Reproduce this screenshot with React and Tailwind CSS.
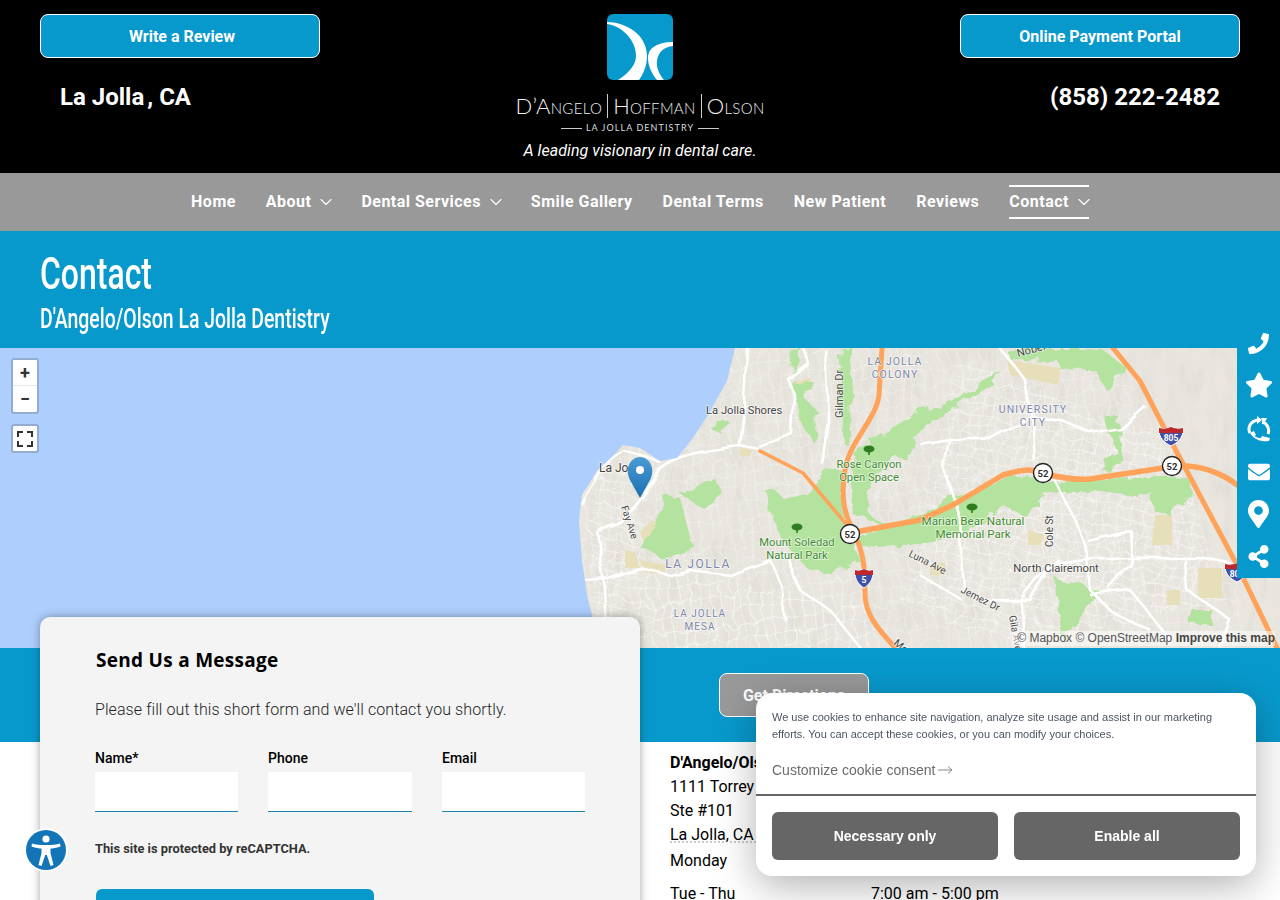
import React from "react";
import { FaStar, FaEnvelope, FaMapMarkerAlt, FaShareAlt, FaPhoneAlt } from "react-icons/fa";
import { ChevronDown } from "lucide-react";

const roboto = "font-['Roboto','Liberation_Sans',sans-serif]";
const arial = "font-['Liberation_Sans',Arial,sans-serif]";
const LAND = "735,348 727,381 708,415 693,438 677,458 660,461 640,448 623,445 613,456 597,471 582,495 579,521 582,561 587,595 592,615 590,648 1280,648 1280,348";
const GREENS = [
  "667,496 680,498 692,545 680,558 657,555 640,548 657,525",
  "677,491 717,480 722,495 703,508",
  "763,488 773,488 783,498 813,491 827,468 843,471 843,518 860,561 833,575 807,568 780,538 777,531",
  "857,448 927,405 930,418 910,451 880,468 867,491 870,515 890,525 853,515 850,481",
  "920,515 953,495 1010,476 1053,481 1187,476 1190,491 1183,505 1170,515 1153,511 1150,491 1127,495 1100,491 1063,491 1037,498 1027,518 1003,505 960,535 920,545 860,548 860,536",
  "1007,348 1100,348 1127,368 1107,391 1097,371 1060,368 1058,361 1007,360",
  "920,415 1003,373 998,381 953,408 950,415 927,425 920,428",
  "1105,416 1118,416 1122,468 1100,470 1116,450",
  "1055,578 1100,590 1075,620 1065,645 1060,610",
  "790,350 800,348 792,385 816,410 815,445 800,420",
  "842,348 852,348 850,440 845,445 838,400",
  "1190,610 1212,610 1212,625 1190,625",
  "790,385 812,380 815,392 796,398",
  "715,420 728,420 722,435 712,430",
];
const TANS = [
  "1007,360 1060,368 1058,385 1010,375", "640,532 652,520 660,528 645,545", "625,550 635,552 640,568 625,568",
  "1155,515 1172,515 1172,545 1152,545", "1198,568 1222,568 1222,598 1198,598", "1167,590 1180,590 1180,605 1167,605",
  "640,560 665,565 665,575 645,572", "795,382 810,378 812,386 797,390", "740,448 752,450 750,456 740,456",
  "1028,530 1045,535 1040,545 1028,545", "930,565 945,562 945,575 930,575",
];
const ROADS = [
  "M640,498 L660,468 C672,458 690,452 740,446 L760,450",
  "M740,446 L745,400 L748,348",
  "M760,448 L793,435 L795,395 L787,378 L807,362 L803,348",
  "M822,465 L828,420 L825,348",
  "M596,530 L620,522 L640,498 M580,505 L600,470 L625,452 L660,462",
  "M596,530 L605,590 L608,648 M585,580 L607,578 L640,568 L670,575 L690,570 L730,575 L770,560 L785,590 L785,620",
  "M790,560 L800,590 L830,610 L860,648",
  "M1000,348 L1025,380 L1033,430 L1035,462",
  "M920,445 L950,440 L985,440 L1030,415 L1060,420 L1090,433 L1120,428 L1145,405",
  "M950,440 L945,470 L960,520 L964,590 L985,600 L1030,600 L1050,565 L1085,560 L1130,558 L1200,558 L1235,565",
  "M1053,478 L1075,520 L1087,555 L1090,590 L1110,610 L1150,630",
  "M1087,540 L1130,530 L1132,565 L1110,590",
  "M1185,560 L1187,590 L1230,620 L1220,648",
  "M1022,648 L1020,600 L1035,580 L1060,560",
  "M920,575 L962,600 M1090,595 L1130,590 L1170,640",
];
const LABELS = [
  ["La Jolla Shores", 706, 414, 11.2, "#444", 0, "start"],
  ["Gilman Dr", 843, 418, 11, "#444", -90, "start"],
  ["LA JOLLA", 895, 365, 10.5, "#7a85a8", 0, "middle", "0.1em"],
  ["COLONY", 895, 378, 10.5, "#7a85a8", 0, "middle", "0.1em"],
  ["Rose Canyon", 869, 468, 11.2, "#3f8a2f", 0, "middle"],
  ["Open Space", 869, 481, 11.2, "#3f8a2f", 0, "middle"],
  ["Mount Soledad", 797, 546, 11.2, "#3f8a2f", 0, "middle"],
  ["Natural Park", 797, 559, 11.2, "#3f8a2f", 0, "middle"],
  ["LA JOLLA", 698, 568, 12, "#7a85a8", 0, "middle", "0.13em"],
  ["LA JOLLA", 700, 617, 10, "#7a85a8", 0, "middle", "0.1em"],
  ["MESA", 700, 630, 10, "#7a85a8", 0, "middle", "0.1em"],
  ["La Jo", 599, 472, 12, "#444", 0, "start"],
  ["Fay Ave", 621, 507, 10, "#444", 72, "start"],
  ["UNIVERSITY", 1033, 413, 10.5, "#7a85a8", 0, "middle", "0.1em"],
  ["CITY", 1033, 426, 10.5, "#7a85a8", 0, "middle", "0.1em"],
  ["Marian Bear Natural", 973, 525, 11.6, "#3f8a2f", 0, "middle"],
  ["Memorial Park", 973, 538, 11.6, "#3f8a2f", 0, "middle"],
  ["Cole St", 1053, 547, 10, "#444", -90, "start"],
  ["North Clairemont", 1056, 572, 11.2, "#444", 0, "middle"],
  ["Luna Ave", 908, 556, 10, "#444", 27, "start"],
  ["Jemez Dr", 960, 592, 10, "#444", 27, "start"],
  ["Nobel Dr", 1018, 357, 11, "#444", -15, "start"],
  ["Gila Ave", 1009, 616, 10, "#444", 80, "start"],
  ["Mo", 893, 644, 10.5, "#444", 40, "start"],
];

function Shield({ x, y, n, w = 13 }) {
  return (
    <g transform={`translate(${x} ${y})`}>
      <path d={`M${-w} -8 Q${-w / 2} -6 0 -9 Q${w / 2} -6 ${w} -8 C${w + 1} 2 ${w / 2} 7 0 10 C${-w / 2} 7 ${-w - 1} 2 ${-w} -8Z`} fill="#3f51a8" stroke="#fff" strokeWidth="1" />
      <path d={`M${-w} -8 Q${-w / 2} -6 0 -9 Q${w / 2} -6 ${w} -8 L${w} -3 L${-w} -3Z`} fill="#c0272d" />
      <text x="0" y="5" fontSize="8.5" fontWeight="700" fill="#fff" textAnchor="middle" fontFamily="Roboto">{n}</text>
    </g>
  );
}
function Circle52({ x, y }) {
  return (
    <g>
      <circle cx={x} cy={y} r="9.5" fill="#fff" stroke="#222" strokeWidth="1.4" />
      <text x={x} y={y + 3.5} fontSize="9.5" fontWeight="700" fill="#333" textAnchor="middle" fontFamily="Roboto">52</text>
    </g>
  );
}
function Tree({ x, y }) {
  return (
    <g fill="#2f7d1e">
      <ellipse cx={x} cy={y} rx="5.5" ry="3.5" />
      <rect x={x - 0.8} y={y} width="1.6" height="6" />
    </g>
  );
}

function MapArt() {
  return (
    <svg viewBox="0 348 1280 300" className="block w-[1280px] h-[300px]">
      <defs>
        <pattern id="streets" width="13" height="11" patternUnits="userSpaceOnUse" patternTransform="rotate(14)">
          <path d="M0 0H13M0 0V11" stroke="#fff" strokeWidth="1" fill="none" opacity="0.9" />
        </pattern>
        <pattern id="streets2" width="10" height="15" patternUnits="userSpaceOnUse" patternTransform="rotate(-8)">
          <path d="M0 0H10M0 0V15" stroke="#fff" strokeWidth="0.9" fill="none" opacity="0.8" />
        </pattern>
        <linearGradient id="pin" x1="0" y1="0" x2="0" y2="1">
          <stop offset="0" stopColor="#4a9ad4" />
          <stop offset="1" stopColor="#1a6fb0" />
        </linearGradient>
        <filter id="rough" x="-5%" y="-5%" width="110%" height="110%">
          <feTurbulence type="fractalNoise" baseFrequency="0.07" numOctaves="3" seed="4" />
          <feDisplacementMap in="SourceGraphic" scale="13" />
        </filter>
        <filter id="wiggle" x="-5%" y="-5%" width="110%" height="110%">
          <feTurbulence type="fractalNoise" baseFrequency="0.05" numOctaves="2" seed="9" />
          <feDisplacementMap in="SourceGraphic" scale="16" />
        </filter>
        <filter id="soft" x="-5%" y="-5%" width="110%" height="110%">
          <feTurbulence type="fractalNoise" baseFrequency="0.025" numOctaves="2" seed="6" />
          <feDisplacementMap in="SourceGraphic" scale="10" />
        </filter>
        <filter id="hills" x="0" y="0" width="100%" height="100%">
          <feTurbulence type="fractalNoise" baseFrequency="0.09 0.03" numOctaves="3" seed="2" />
          <feColorMatrix values="0 0 0 0 0.6  0 0 0 0 0.58  0 0 0 0 0.52  1.6 0 0 0 -0.72" />
        </filter>
        <clipPath id="land"><polygon points={LAND} /></clipPath>
      </defs>
      <rect x="0" y="348" width="1280" height="300" fill="#aecffd" />
      <polygon points={LAND} fill="#e9e6df" />
      <g clipPath="url(#land)">
        <rect x="579" y="348" width="701" height="300" filter="url(#hills)" opacity="0.35" />
        <g filter="url(#wiggle)">
          <polygon points="579,348 1113,348 1240,600 1240,648 579,648" fill="url(#streets2)" opacity="0.8" />
          <polygon points="960,360 1170,440 1230,600 1000,648 900,600" fill="url(#streets)" />
          <polygon points="590,470 640,470 650,648 592,648" fill="url(#streets)" />
          <polygon points="640,570 860,600 880,648 650,648" fill="url(#streets2)" />
        </g>
        {TANS.map((p) => <polygon key={p} points={p} fill="#e6dfba" />)}
        <g filter="url(#rough)">
          {GREENS.map((p) => <polygon key={p} points={p} fill="#b4e39f" />)}
        </g>
        <g filter="url(#soft)">
          {ROADS.map((d) => <path key={d} d={d} fill="none" stroke="#fff" strokeWidth="2.6" strokeLinejoin="round" />)}
        </g>
      </g>
      <g fill="none" stroke="#ffa25a" strokeLinecap="round" strokeLinejoin="round">
        <path d="M882,348 L879,395 C876,420 850,440 845,470 C840,500 845,515 855,535 C866,558 865,580 865,595 C866,620 885,635 895,648" strokeWidth="5" />
        <path d="M760,451 L803,473 L847,525" strokeWidth="3.6" />
        <path d="M850,533 L920,520 L953,505 L1003,475 C1020,470 1030,468 1043,473 C1060,478 1075,480 1090,479 L1163,468 L1187,466 C1205,467 1225,475 1237,485" strokeWidth="5.5" />
        <path d="M1113,348 L1140,381 L1173,445 L1237,565 L1277,648" strokeWidth="5" />
      </g>
      <Tree x={869} y={449} />
      <Tree x={797} y={527} />
      <Tree x={972} y={507} />
      {LABELS.map(([t, x, y, s, c, r, a, ls]) => (
        <text key={t + x} x={x} y={y} fontSize={s} fill={c} textAnchor={a} fontFamily="Roboto" letterSpacing={ls} transform={r ? `rotate(${r} ${x} ${y})` : undefined} stroke="#fff" strokeOpacity="0.7" strokeWidth="1.5" paintOrder="stroke">{t}</text>
      ))}
      <Circle52 x={850} y={534} />
      <Circle52 x={1043} y={473} />
      <Circle52 x={1172} y={466} />
      <Shield x={864} y={578} n="5" w={9} />
      <Shield x={1171} y={436} n="805" w={12} />
      <Shield x={1237} y={572} n="805" w={12} />
      <path d="M640,498 L630,480 C624,468 631,457 640,457 C649,457 656,468 650,480Z" fill="url(#pin)" />
      <circle cx="640" cy="470" r="4" fill="#fff" />
    </svg>
  );
}

function Logo() {
  return (
    <div className="flex flex-col items-center">
      <svg viewBox="0 0 66 66" className="w-[66px] h-[66px]">
        <defs><clipPath id="lg"><rect width="66" height="66" rx="6" /></clipPath></defs>
        <g clipPath="url(#lg)">
          <rect width="66" height="66" fill="#0899cc" />
          <path d="M0 8 C18 8 40 20 40 42 C40 52 36 60 32 66 L11 66 C20 60 29 52 29 42 C29 26 15 12 0 10Z" fill="#fff" />
          <path d="M66 28 C52 28 41 33 41 44 C41 52 45 60 50 66 L57 66 C52 60 49 53 50 47 C51 38 57 33 66 32Z" fill="#fff" />
        </g>
      </svg>
      <div className="mt-[13px] flex items-center h-[26px] text-[#f0f0f0] font-['Lato',sans-serif] font-light text-[22px] tracking-[0.015em] leading-none whitespace-nowrap [font-variant:small-caps]">
        <span>D’Angelo</span>
        <span className="mx-[5px] w-px h-[24px] bg-[#ccc]" />
        <span>Hoffman</span>
        <span className="mx-[5px] w-px h-[24px] bg-[#ccc]" />
        <span>Olson</span>
      </div>
      <div className="mt-[3px] flex items-center gap-[4px] text-[#ddd]">
        <span className="w-[21px] h-px bg-[#ccc]" />
        <span className="font-['Lato',sans-serif] text-[9px] leading-[12px] tracking-[0.12em]">LA JOLLA DENTISTRY</span>
        <span className="w-[21px] h-px bg-[#ccc]" />
      </div>
    </div>
  );
}

function TopButton({ children, className = "" }) {
  return (
    <a className={`flex items-center justify-center w-[280px] h-[44px] pt-[1px] rounded-[8px] border border-white bg-[#0899cc] text-white font-bold text-[16px] ${className}`}>{children}</a>
  );
}

const NAV = [["Home"], ["About", 1], ["Dental Services", 1], ["Smile Gallery"], ["Dental Terms"], ["New Patient"], ["Reviews"], ["Contact", 1, 1]];

function SideRail() {
  return (
    <div className="fixed right-0 top-[322px] w-[43px] h-[256px] bg-[#0899cc] text-white flex flex-col items-center">
      <FaPhoneAlt className="w-[21px] h-[21px] mt-[11px] -scale-x-100 shrink-0" />
      <FaStar className="w-[28px] h-[28px] mt-[17px] shrink-0" />
      <svg viewBox="0 0 24 26" className="w-[24px] h-[26px] mt-[17px] shrink-0" fill="none">
        <path d="M11 4 C4 5 0 11 3 17" stroke="#fff" strokeWidth="3" />
        <path d="M10 0 L15 4 L10 8Z" fill="#fff" />
        <path d="M15 6 C20 7 23 13 21 18" stroke="#fff" strokeWidth="3" />
        <path d="M14 2 L20 2 L17 8Z" fill="#fff" />
        <path d="M3 17 L7 15 L9 19 L7.5 20 C9.5 21.5 11.5 22 14 22 L15 20 L23 22 L22 25 C15 26 7 24 3 17Z" fill="#fff" />
      </svg>
      <FaEnvelope className="w-[22px] h-[22px] mt-[19px] shrink-0" />
      <FaMapMarkerAlt className="w-[21px] h-[28px] mt-[17px] shrink-0" />
      <FaShareAlt className="w-[21px] h-[23px] mt-[17px] shrink-0" />
    </div>
  );
}

function Accessibility() {
  return (
    <div className="fixed left-[24px] top-[828px] w-[44px] h-[44px] rounded-full bg-white flex items-center justify-center">
      <svg viewBox="0 0 40 40" className="w-[40px] h-[40px]">
        <circle cx="20" cy="20" r="20" fill="#1375b8" />
        <circle cx="20" cy="9" r="3.6" fill="#fff" />
        <path d="M6 13.5 C12 15.5 28 15.5 34 13.5 L34.5 16.5 C30 18 27 18.5 24.5 18.5 L24.5 23 L27.5 35 L24.5 36 L20.8 25 L19.2 25 L15.5 36 L12.5 35 L15.5 23 L15.5 18.5 C13 18.5 10 18 5.5 16.5Z" fill="#fff" />
      </svg>
    </div>
  );
}

function CookieBox() {
  return (
    <div className={`fixed left-[756px] top-[693px] w-[500px] h-[183px] bg-white rounded-[16px] shadow-[0_10px_40px_rgba(0,0,0,0.3)] ${arial}`}>
      <div className="pt-[16px] px-[16px] h-[103px] border-b-2 border-[#666]">
        <p className="text-[11px] leading-[17px] text-[#4b5563]">We use cookies to enhance site navigation, analyze site usage and assist in our marketing efforts. You can accept these cookies, or you can modify your choices.</p>
        <p className="mt-[17px] flex items-center gap-[3px] text-[14px] leading-[20px] text-[#6b6b6b]">
          Customize cookie consent
          <svg viewBox="0 0 15 10" className="w-[15px] h-[10px]" fill="none" stroke="#888" strokeWidth="1">
            <path d="M0 5H14M10 1.5L14 5L10 8.5" />
          </svg>
        </p>
      </div>
      <div className="px-[16px] pt-[16px] flex gap-[16px]">
        <button className="flex-1 h-[48px] rounded-[6px] bg-[#666] text-white font-bold text-[14px]">Necessary only</button>
        <button className="flex-1 h-[48px] rounded-[6px] bg-[#666] text-white font-bold text-[14px]">Enable all</button>
      </div>
    </div>
  );
}

function Field({ label, className }) {
  return (
    <label className={`flex flex-col ${className}`}>
      <span className="text-[14px] leading-[16px] font-medium text-black mb-[6px]">{label}</span>
      <input className="h-[40px] w-full bg-white border-b border-[#1a85ad] outline-none" />
    </label>
  );
}

function Row({ a, b, className }) {
  return (
    <div className={`flex ${className}`}>
      <span className="w-[201px]">{a}</span>
      <span>{b}</span>
    </div>
  );
}

export default function App() {
  return (
    <div className={`relative h-[900px] overflow-hidden bg-white ${roboto}`}>
      <header className="h-[173px] bg-black flex justify-between px-[40px] pt-[14px]">
        <div className="w-[280px]">
          <TopButton className="pl-[4px]">Write a Review</TopButton>
          <p className="mt-[23px] pl-[20px] text-white text-[24px] leading-[32px] font-bold">La Jolla<span className="ml-[3px]">,</span> CA</p>
        </div>
        <div className="flex flex-col items-center">
          <Logo />
          <p className="mt-[5px] text-white italic text-[16px] tracking-[0.004em] leading-[24px]">A leading visionary in dental care.</p>
        </div>
        <div className="w-[280px]">
          <TopButton>Online Payment Portal</TopButton>
          <p className="mt-[23px] pr-[20px] text-right text-white text-[24px] leading-[32px] font-bold">(858) 222-2482</p>
        </div>
      </header>

      <nav className="h-[58px] bg-[#999] flex items-center justify-center gap-[30px] text-white font-bold text-[16px] tracking-[0.03em]">
        {NAV.map(([t, sub, active]) => (
          <a key={t} className={`flex items-center h-[34px] ${active ? "border-y-2 border-white" : ""}`}>
            {t}
            {sub && <ChevronDown className="ml-[5px] -mr-[5px] w-[20px] h-[20px]" strokeWidth={1.3} />}
          </a>
        ))}
      </nav>

      <section className="h-[117px] bg-[#0899cc] px-[40px] pt-[16px] text-white">
        <h1 className="text-[45px] leading-[54px] font-medium origin-left scale-x-[0.71] whitespace-nowrap">Contact</h1>
        <h2 className="text-[27px] leading-[36px] font-medium origin-left scale-x-[0.72] whitespace-nowrap">D'Angelo/Olson La Jolla Dentistry</h2>
      </section>

      <section className="h-[300px] relative overflow-hidden">
        <MapArt />
        <div className="absolute left-[11px] top-[10px] w-[28px] rounded-[3px] border-2 border-[#94acd0] bg-white flex flex-col items-center text-[#333]">
          <span className="h-[26px] w-full flex items-center justify-center border-b border-[#e6e6e6] text-[18px] font-bold leading-none">+</span>
          <span className="h-[26px] w-full flex items-center justify-center text-[18px] font-bold leading-none">−</span>
        </div>
        <div className="absolute left-[11px] top-[76px] w-[28px] h-[29px] rounded-[3px] border-2 border-[#94acd0] bg-white flex items-center justify-center">
          <svg viewBox="0 0 16 16" className="w-[16px] h-[16px]" fill="none" stroke="#333" strokeWidth="2">
            <path d="M1 6V1H6M10 1H15V6M15 10V15H10M6 15H1V10" />
          </svg>
        </div>
        <div className={`absolute right-[5px] bottom-[2px] pl-[5px] text-[12px] leading-[15px] text-[#555] bg-white/50 ${arial}`}>
          © Mapbox © OpenStreetMap <b className="text-[#444]">Improve this map</b>
        </div>
      </section>

      <div className="h-[94px] bg-[#0899cc]" />

      <div className="relative flex -mt-[125px] pl-[40px]">
        <div className="w-[600px] h-[400px] bg-[#f4f4f4] rounded-t-[10px] shadow-[0_0_10px_rgba(0,0,0,0.35)] pl-[55px] pr-[55px] pt-[31px]">
          <h3 className="ml-[1px] font-['Open_Sans',sans-serif] font-bold text-[19px] tracking-[0.015em] leading-[24px] text-black">Send Us a Message</h3>
          <p className="mt-[26px] text-[16px] font-light tracking-[0.005em] leading-[24px] text-[#222]">Please fill out this short form and we'll contact you shortly.</p>
          <div className="mt-[28px] flex gap-[30px]">
            <Field label="Name*" className="w-[143px]" />
            <Field label="Phone" className="w-[144px]" />
            <Field label="Email" className="w-[143px]" />
          </div>
          <p className="mt-[29px] text-[12.8px] leading-[16px] font-bold text-[#333]">This site is protected by reCAPTCHA.</p>
          <button className="mt-[32px] ml-[1px] block w-[278px] h-[44px] rounded-[6px] bg-[#0899cc]" />
        </div>
        <div className="pl-[30px] w-[640px]">
          <a className="ml-[49px] mt-[56px] pt-[1px] flex items-center justify-center w-[150px] h-[44px] rounded-[8px] border border-white bg-[#999] text-white font-bold text-[16px]">Get Directions</a>
          <div className="mt-[34px] text-[16px] leading-[24px] text-black">
            <p className="font-bold">D'Angelo/Olson La Jolla Dentistry</p>
            <p>1111 Torrey Pines Rd</p>
            <p>Ste #101</p>
            <p className="underline decoration-dotted decoration-[#bbb] underline-offset-2">La Jolla, CA 92037</p>
            <Row a="Monday" b="7:00 am - 5:00 pm" className="mt-[2px]" />
            <Row a="Tue - Thu" b="7:00 am - 5:00 pm" className="mt-[9px]" />
          </div>
        </div>
      </div>

      <SideRail />
      <Accessibility />
      <CookieBox />
    </div>
  );
}
